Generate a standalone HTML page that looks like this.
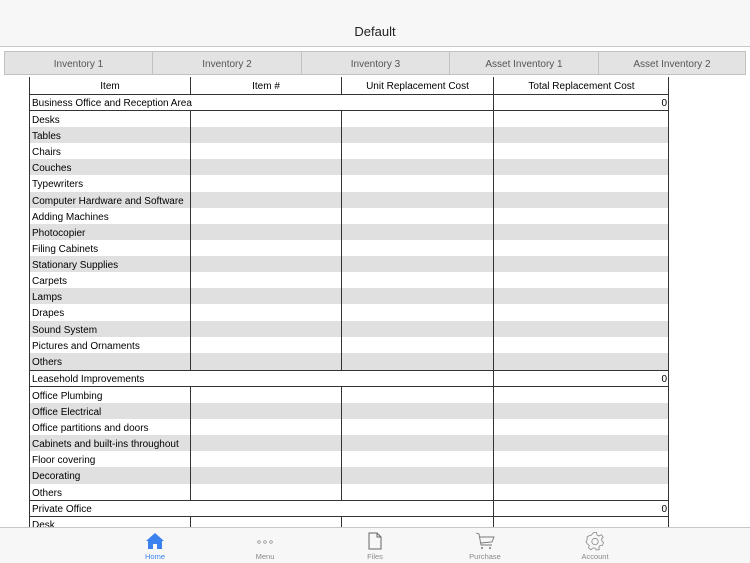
<!DOCTYPE html>
<html><head><style>
*{margin:0;padding:0;box-sizing:border-box}
body{width:750px;height:563px;overflow:hidden;background:#fff;font-family:"Liberation Sans",Arial,sans-serif;position:relative;color:#000}
.hdr{position:absolute;left:0;top:0;width:750px;height:47px;background:#f7f7f7;border-bottom:1px solid #c8c8c8;text-align:center;font-size:13px;line-height:63px;color:#222}
.tab{position:absolute;top:51px;height:24px;background:#e3e3e3;border:1px solid #c2c2c2;font-size:10px;color:#555;text-align:center;line-height:26px}
.r{position:absolute;left:29px;width:640px;font-size:10px;border-left:1px solid #333;border-right:1px solid #333}
.r div{position:absolute;top:0;bottom:0}
.g{background:#e0e0e0}
.c1{left:0;width:160px;padding-left:2px;line-height:20px}
.c2{left:160px;width:151px;border-left:1px solid #333}
.c3{left:311px;width:152px;border-left:1px solid #333}
.c4{left:463px;width:176px;border-left:1px solid #333}
.s{border-top:1px solid #333;border-bottom:1px solid #333}
.bar{position:absolute;left:0;top:527px;width:750px;height:36px;background:#f7f7f7;border-top:1px solid #c8c8c8}
.it{position:absolute;top:0;width:60px;text-align:center;font-size:7.5px;color:#8a8a8a}
.it svg{position:absolute;left:20px;top:3px}
.it span{position:absolute;left:0;right:0;top:24px}
</style></head><body>
<div class="hdr">Default</div>
<div class="tab" style="left:4px;width:149px">Inventory 1</div>
<div class="tab" style="left:152px;width:150px">Inventory 2</div>
<div class="tab" style="left:301px;width:149px">Inventory 3</div>
<div class="tab" style="left:449px;width:150px">Asset Inventory 1</div>
<div class="tab" style="left:598px;width:148px">Asset Inventory 2</div>

<div class="r" style="top:77px;height:18px;text-align:center;line-height:19px">
<div class="c1" style="padding:0;line-height:19px">Item</div><div class="c2">Item #</div><div class="c3">Unit Replacement Cost</div><div class="c4">Total Replacement Cost</div></div>

<div class="r s" style="top:94px;height:17px"><div style="left:2px;line-height:17px">Business Office and Reception Area</div><div class="c4" style="text-align:right;padding-right:2px;line-height:17px">0</div></div>
<div class="r" style="top:111px;height:16px"><div class="c1">Desks</div><div class="c2"></div><div class="c3"></div><div class="c4"></div></div>
<div class="r g" style="top:127px;height:16px"><div class="c1">Tables</div><div class="c2"></div><div class="c3"></div><div class="c4"></div></div>
<div class="r" style="top:143px;height:16px"><div class="c1">Chairs</div><div class="c2"></div><div class="c3"></div><div class="c4"></div></div>
<div class="r g" style="top:159px;height:16px"><div class="c1">Couches</div><div class="c2"></div><div class="c3"></div><div class="c4"></div></div>
<div class="r" style="top:175px;height:17px"><div class="c1">Typewriters</div><div class="c2"></div><div class="c3"></div><div class="c4"></div></div>
<div class="r g" style="top:192px;height:16px"><div class="c1">Computer Hardware and Software</div><div class="c2"></div><div class="c3"></div><div class="c4"></div></div>
<div class="r" style="top:208px;height:16px"><div class="c1">Adding Machines</div><div class="c2"></div><div class="c3"></div><div class="c4"></div></div>
<div class="r g" style="top:224px;height:16px"><div class="c1">Photocopier</div><div class="c2"></div><div class="c3"></div><div class="c4"></div></div>
<div class="r" style="top:240px;height:16px"><div class="c1">Filing Cabinets</div><div class="c2"></div><div class="c3"></div><div class="c4"></div></div>
<div class="r g" style="top:256px;height:16px"><div class="c1">Stationary Supplies</div><div class="c2"></div><div class="c3"></div><div class="c4"></div></div>
<div class="r" style="top:272px;height:16px"><div class="c1">Carpets</div><div class="c2"></div><div class="c3"></div><div class="c4"></div></div>
<div class="r g" style="top:288px;height:16px"><div class="c1">Lamps</div><div class="c2"></div><div class="c3"></div><div class="c4"></div></div>
<div class="r" style="top:304px;height:17px"><div class="c1">Drapes</div><div class="c2"></div><div class="c3"></div><div class="c4"></div></div>
<div class="r g" style="top:321px;height:16px"><div class="c1">Sound System</div><div class="c2"></div><div class="c3"></div><div class="c4"></div></div>
<div class="r" style="top:337px;height:16px"><div class="c1">Pictures and Ornaments</div><div class="c2"></div><div class="c3"></div><div class="c4"></div></div>
<div class="r g" style="top:353px;height:17px"><div class="c1">Others</div><div class="c2"></div><div class="c3"></div><div class="c4"></div></div>

<div class="r s" style="top:370px;height:17px"><div style="left:2px;line-height:17px">Leasehold Improvements</div><div class="c4" style="text-align:right;padding-right:2px;line-height:17px">0</div></div>
<div class="r" style="top:387px;height:16px"><div class="c1">Office Plumbing</div><div class="c2"></div><div class="c3"></div><div class="c4"></div></div>
<div class="r g" style="top:403px;height:16px"><div class="c1">Office Electrical</div><div class="c2"></div><div class="c3"></div><div class="c4"></div></div>
<div class="r" style="top:419px;height:16px"><div class="c1">Office partitions and doors</div><div class="c2"></div><div class="c3"></div><div class="c4"></div></div>
<div class="r g" style="top:435px;height:16px"><div class="c1">Cabinets and built-ins throughout</div><div class="c2"></div><div class="c3"></div><div class="c4"></div></div>
<div class="r" style="top:451px;height:16px"><div class="c1">Floor covering</div><div class="c2"></div><div class="c3"></div><div class="c4"></div></div>
<div class="r g" style="top:467px;height:17px"><div class="c1">Decorating</div><div class="c2"></div><div class="c3"></div><div class="c4"></div></div>
<div class="r" style="top:484px;height:16px"><div class="c1">Others</div><div class="c2"></div><div class="c3"></div><div class="c4"></div></div>
<div class="r s" style="top:500px;height:17px"><div style="left:2px;line-height:17px">Private Office</div><div class="c4" style="text-align:right;padding-right:2px;line-height:17px">0</div></div>
<div class="r" style="top:517px;height:10px;overflow:hidden"><div class="c1" style="line-height:18px">Desk</div><div class="c2"></div><div class="c3"></div><div class="c4"></div></div>

<div class="bar">
<div class="it" style="left:125px;color:#3b82f0"><svg width="20" height="20" viewBox="0 0 20 20"><path d="M10 2 L1 10 L3 10 L3 18 L8 18 L8 13 L12 13 L12 18 L17 18 L17 10 L19 10 Z" fill="#3b82f0"/></svg><span>Home</span></div>
<div class="it" style="left:235px"><svg width="20" height="20" viewBox="0 0 20 20"><circle cx="4" cy="11" r="1.3" fill="none" stroke="#888" stroke-width=".7"/><circle cx="10" cy="11" r="1.3" fill="none" stroke="#888" stroke-width=".7"/><circle cx="16" cy="11" r="1.3" fill="none" stroke="#888" stroke-width=".7"/></svg><span>Menu</span></div>
<div class="it" style="left:345px"><svg width="20" height="20" viewBox="0 0 20 20"><path d="M4 2 L12 2 L16 6 L16 18 L4 18 Z M12 2 L12 6 L16 6" fill="none" stroke="#666" stroke-width="1"/></svg><span>Files</span></div>
<div class="it" style="left:455px"><svg width="20" height="20" viewBox="0 0 20 20"><path d="M1 2 L4 3 L6 14 L17 14 M5 6 L19 6 L17 11 L6 12" fill="none" stroke="#777" stroke-width=".9"/><circle cx="7" cy="17" r="1" fill="#777"/><circle cx="15" cy="17" r="1" fill="#777"/></svg><span>Purchase</span></div>
<div class="it" style="left:565px"><svg width="20" height="20" viewBox="0 0 20 20"><path d="M8.5 1.5 L11.5 1.5 L12 4 L14 5 L16.3 3.8 L18.2 6.2 L16.5 8 L17 10 L18.5 11.5 L17.5 14.3 L15 14.5 L13.8 16.3 L14.2 18.6 L11.3 19 L10 17 L8 17 L6 18.6 L3.5 17 L4.3 14.5 L2.5 13 L1 11 L2.2 8.5 L2 6 L4.5 4.5 L6.3 4.2 Z" fill="none" stroke="#888" stroke-width=".8"/><circle cx="10" cy="10.5" r="3.2" fill="none" stroke="#888" stroke-width=".8"/></svg><span>Account</span></div>
</div>
</body></html>
